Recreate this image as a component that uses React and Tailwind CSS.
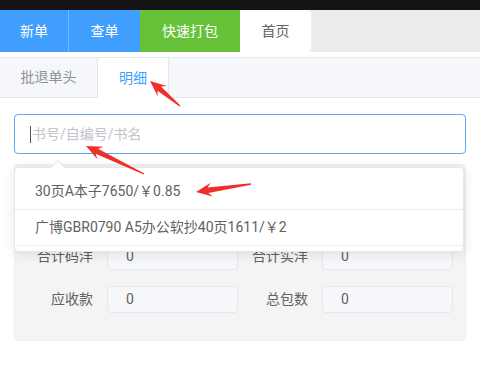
import React from "react";

const FONT = { fontFamily: 'Roboto, "Noto Sans CJK SC", "Noto Sans", sans-serif' };

function arrowPoints([x1, y1], [x2, y2], head = 16, barb = 7, shaft = 2.8, tail = 0.7) {
  const dx = x2 - x1;
  const dy = y2 - y1;
  const len = Math.hypot(dx, dy);
  const ux = dx / len;
  const uy = dy / len;
  const nx = -uy;
  const ny = ux;
  const bx = x2 - ux * head;
  const by = y2 - uy * head;
  const sx = x2 - ux * head * 0.75;
  const sy = y2 - uy * head * 0.75;
  const pts = [
    [x1 + nx * tail, y1 + ny * tail],
    [sx + nx * shaft, sy + ny * shaft],
    [bx + nx * barb, by + ny * barb],
    [x2, y2],
    [bx - nx * barb, by - ny * barb],
    [sx - nx * shaft, sy - ny * shaft],
    [x1 - nx * tail, y1 - ny * tail],
  ];
  return pts.map((p) => p.map((v) => v.toFixed(1)).join(",")).join(" ");
}

function Arrows() {
  const arrows = [
    [[180, 106], [150, 81]],
    [[144, 174], [86, 146]],
    [[251, 184], [196, 192]],
  ];
  return (
    <svg className="pointer-events-none absolute left-0 top-0 z-50" width="480" height="374">
      {arrows.map(([a, b], i) => (
        <polygon key={i} points={arrowPoints(a, b)} fill="#ef2f2a" />
      ))}
    </svg>
  );
}

function Field({ label, value, labelWidth }) {
  return (
    <div className="flex items-center">
      <span
        className={`${labelWidth} shrink-0 pr-[14px] text-right text-[14px] text-[#606266]`}
      >
        {label}
      </span>
      <div className="flex h-[27px] w-[131px] items-center rounded-[4px] border border-[#e4e7ed] bg-[#f5f7fa] pl-[18px] text-[14px] text-[#606266]">
        {value}
      </div>
    </div>
  );
}

function FieldRow({ left, right }) {
  return (
    <div className="flex">
      <Field label={left} value="0" labelWidth="w-[92px]" />
      <Field label={right} value="0" labelWidth="w-[84px]" />
    </div>
  );
}

export default function App() {
  const options = [
    "30页A本子7650/￥0.85",
    "广博GBR0790 A5办公软抄40页1611/￥2",
    "广博GBR0791 A5办公软抄60页1612/￥3",
  ];

  return (
    <div className="relative h-[374px] w-[480px] overflow-hidden bg-white" style={FONT}>
      <div className="h-[10px] bg-[#141414]" />

      <div className="flex h-[42px] bg-[#ececec] text-[14px]">
        <div className="flex w-[69px] items-center justify-center border-r border-[#79b8ff] bg-[#409eff] text-white">新单</div>
        <div className="flex w-[71px] items-center justify-center bg-[#409eff] text-white">查单</div>
        <div className="flex w-[100px] items-center justify-center bg-[#67c23a] text-white">快速打包</div>
        <div className="flex w-[71px] items-center justify-center rounded-r-[4px] bg-white text-[#606266]">首页</div>
      </div>

      <div className="mt-[5px] flex h-[41px] border-y border-[#e4e7ed] bg-[#f5f7fa] text-[14px]">
        <div className="flex w-[98px] items-center justify-center border-r border-[#e4e7ed] text-[#909399]">批退单头</div>
        <div className="-mb-px flex w-[71px] items-center justify-center border-r border-[#e4e7ed] bg-white text-[#409eff]">明细</div>
      </div>

      <div className="relative px-[14px] pt-[16px]">
        <div className="flex h-[40px] items-center rounded-[4px] border border-[#5aa8f5] bg-white pl-[15px] text-[14px]">
          <span className="mr-px h-[17px] w-px bg-[#555]" />
          <span className="text-[#c0c4cc]">书号/自编号/书名</span>
        </div>

        <div className="mt-[10px] rounded-[4px] border border-[#ebeef5] bg-[#f4f4f5] pb-[27px] pt-[35px]">
          <div className="flex flex-col gap-[16px]">
            <FieldRow left="合计数量" right="合计品种" />
            <FieldRow left="合计码洋" right="合计实洋" />
            <FieldRow left="应收款" right="总包数" />
          </div>
        </div>

        <div className="absolute left-[14px] right-[16px] top-[69px] z-10 rounded-[4px] border border-[#e4e7ed] bg-white shadow-[0_2px_12px_rgba(0,0,0,0.1)]">
          <div className="absolute -top-[6px] left-[38px] h-[10px] w-[10px] rotate-45 border-l border-t border-[#e4e7ed] bg-white" />
          <div className="relative h-[83px] overflow-hidden pt-[6px]">
            {options.map((text) => (
              <div
                key={text}
                className="flex h-[36px] items-center border-b border-dotted border-[#dcdfe6] pl-[20px] text-[14px] text-[#606266]"
              >
                {text}
              </div>
            ))}
          </div>
        </div>
      </div>

      <Arrows />
    </div>
  );
}
